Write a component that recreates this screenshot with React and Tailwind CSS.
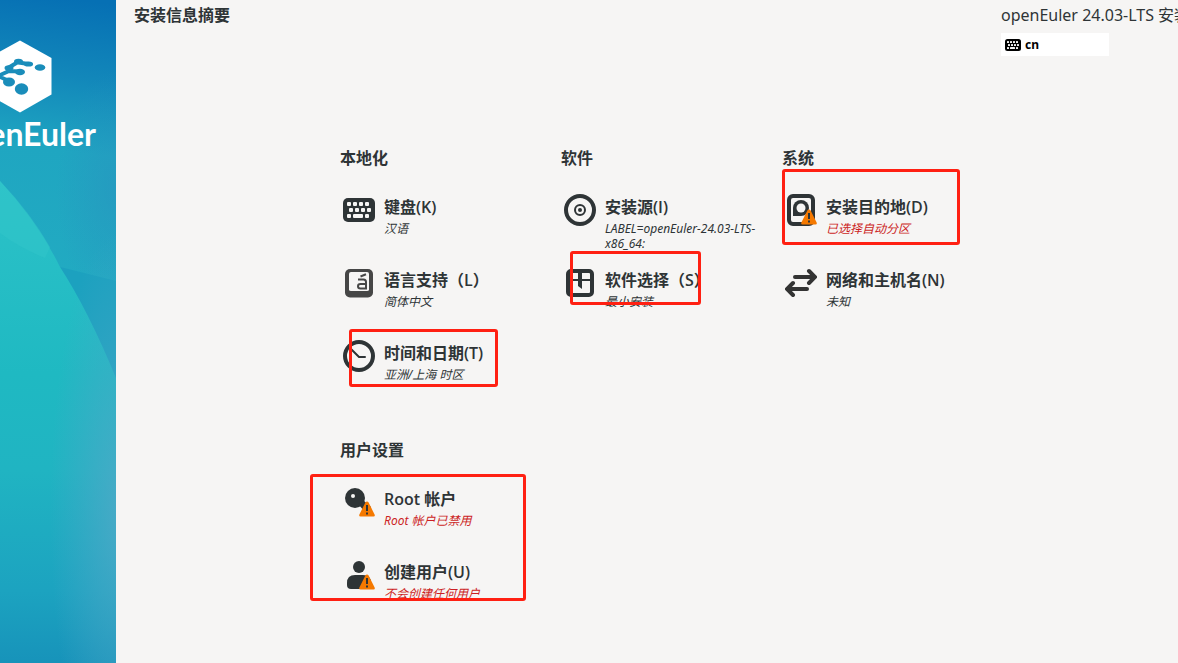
const SECTIONS = [
  {
    title: '本地化',
    items: [
      { icon: KeyboardIcon, label: '键盘(K)', status: '汉语' },
      { icon: LanguageIcon, label: '语言支持（L）', status: '简体中文' },
      { icon: ClockIcon, label: '时间和日期(T)', status: '亚洲/上海 时区', box: 'left-[9px] top-[5px] w-[149px] h-[58px]' },
    ],
  },
  {
    title: '软件',
    items: [
      { icon: DiscIcon, label: '安装源(I)', status: 'LABEL=openEuler-24.03-LTS-x86_64:' },
      { icon: PackageIcon, label: '软件选择（S）', status: '最小安装', box: 'left-[9px] top-0 w-[131px] h-[54px]' },
    ],
  },
  {
    title: '系统',
    items: [
      { icon: DiskIcon, label: '安装目的地(D)', status: '已选择自动分区', warn: true, box: 'left-0 top-[-9px] w-[178px] h-[76px]' },
      { icon: NetworkIcon, label: '网络和主机名(N)', status: '未知' },
    ],
  },
  {
    title: '用户设置',
    box: 'left-[-30px] top-[4px] w-[216px] h-[127px]',
    items: [
      { icon: RootIcon, label: 'Root 帐户', status: 'Root 帐户已禁用', warn: true },
      { icon: UserIcon, label: '创建用户(U)', status: '不会创建任何用户', warn: true },
    ],
  },
]

function KeyboardIcon({ className = 'w-8 h-8' }) {
  return (
    <svg viewBox="0 0 32 32" className={className} aria-hidden="true">
      <rect x="0" y="4" width="32" height="24" rx="5" fill="currentColor" />
      <g fill="#f6f5f4">
        {[4, 10, 16, 22].map((x) => <rect key={x} x={x} y="8" width="4" height="4" rx="1" />)}
        {[6, 12, 18, 24].map((x) => <rect key={x} x={x} y="14" width="4" height="4" rx="1" />)}
        <rect x="4" y="20" width="4" height="4" rx="1" />
        <rect x="10" y="20" width="10" height="4" rx="1" />
        <rect x="22" y="20" width="4" height="4" rx="1" />
      </g>
    </svg>
  )
}

function LanguageIcon() {
  return (
    <svg viewBox="0 0 32 32" className="w-8 h-8 text-[#464646]" aria-hidden="true">
      <rect x="2" y="2" width="28" height="28.500" rx="5" fill="currentColor" />
      <path d="M8 5H24Q26 5 26 7V22.500Q26 24 24 24H8Q6 24 6 22.500V7Q6 5 8 5Z" fill="#f6f5f4" />
      <path d="M15 12.500H20.500Q23 12.500 23 15V21.500H17.500Q15 21.500 15 19.200Q15 17 17.500 17H23" fill="none" stroke="currentColor" strokeWidth="2" />
      <path d="M17.500 9.500L23 7.300" stroke="currentColor" strokeWidth="2" />
    </svg>
  )
}

function ClockIcon() {
  return (
    <svg viewBox="0 0 32 32" className="w-8 h-8" fill="none" stroke="currentColor" aria-hidden="true">
      <circle cx="16" cy="16" r="14" strokeWidth="4" />
      <path d="M8.500 9.500L16 17H22" strokeWidth="2" strokeLinecap="round" />
    </svg>
  )
}

function DiscIcon() {
  return (
    <svg viewBox="0 0 32 32" className="w-8 h-8" fill="none" stroke="currentColor" aria-hidden="true">
      <circle cx="16" cy="16" r="14" strokeWidth="4" />
      <circle cx="16" cy="16" r="5" strokeWidth="2" />
      <circle cx="16" cy="16" r="2" fill="currentColor" stroke="none" />
    </svg>
  )
}

function PackageIcon() {
  return (
    <svg viewBox="0 0 32 32" className="w-8 h-8" fill="none" stroke="currentColor" aria-hidden="true">
      <rect x="4" y="4" width="24" height="24" rx="3" strokeWidth="4" />
      <path d="M5 13H27" strokeWidth="2" />
      <path d="M14 5H18V22L14 19Z" fill="currentColor" stroke="none" />
    </svg>
  )
}

function DiskIcon() {
  return (
    <svg viewBox="0 0 32 32" className="w-8 h-8" aria-hidden="true">
      <rect x="4" y="2" width="24" height="28" rx="4" fill="none" stroke="currentColor" strokeWidth="4" />
      <path d="M8 22V14A8 8 0 1 1 16 22Z" fill="currentColor" />
      <circle cx="16" cy="14" r="4.500" fill="#f6f5f4" />
    </svg>
  )
}

function NetworkIcon() {
  return (
    <svg viewBox="0 0 32 32" className="w-8 h-8 text-[#333333]" fill="none" stroke="currentColor" strokeWidth="4" strokeLinecap="round" aria-hidden="true">
      <path d="M10 10H29" />
      <path d="M24 4L30 10L24 16" />
      <path d="M22 22H3" />
      <path d="M8 16L2 22L8 28" />
    </svg>
  )
}

function RootIcon() {
  return (
    <svg viewBox="0 0 32 32" className="w-8 h-8" aria-hidden="true">
      <circle cx="12" cy="12" r="10" fill="currentColor" />
      <path d="M15 18L21 15L28 21V28H24Z" fill="currentColor" />
      <circle cx="10" cy="10" r="2" fill="#f6f5f4" />
    </svg>
  )
}

function UserIcon() {
  return (
    <svg viewBox="0 0 32 32" className="w-8 h-8" aria-hidden="true">
      <circle cx="16" cy="8" r="6" fill="currentColor" />
      <path d="M4 26V24Q4 16 12 16H20Q28 16 28 24V30H8Q4 30 4 26Z" fill="currentColor" />
    </svg>
  )
}

function WarningBadge() {
  return (
    <svg viewBox="0 0 16 16" className="absolute right-0 bottom-px w-4 h-4" aria-hidden="true">
      <path d="M8 .5Q9 .5 9.600 1.600L15.600 13.400Q16.400 15.500 14.500 15.500H1.500Q-.4 15.500 .4 13.400L6.400 1.600Q7 .5 8 .5Z" fill="#f57900" />
      <path d="M7 4H9V10H7ZM7 11.500H9V13.500H7Z" fill="#2e3436" />
    </svg>
  )
}

// Red marker frame drawn over the options that need attention
function Frame({ className }) {
  return <span className={`absolute pointer-events-none rounded-[3px] border-3 border-[#ff2012] ${className}`} />
}

function Spoke({ item }) {
  const Icon = item.icon
  return (
    <button type="button" className="relative flex items-start w-full min-h-[73px] pt-4 pl-[3px] gap-[9px] text-left">
      <span className="relative shrink-0">
        <Icon />
        {item.warn && <WarningBadge />}
      </span>
      <span className="flex-1 min-w-0 pr-4">
        <span className="block leading-[27px] font-semibold whitespace-nowrap font-['Open_Sans','Noto_Sans_CJK_SC',sans-serif]">{item.label}</span>
        <span className={`block text-[12px] leading-[15px] italic ${item.warn ? 'text-[#cc1f24]' : ''}`}>{item.status}</span>
      </span>
      {item.box && <Frame className={item.box} />}
    </button>
  )
}

function Section({ section }) {
  return (
    <section>
      <h2 className="text-base font-bold">{section.title}</h2>
      <div className="relative mt-2">
        {section.items.map((item) => (
          <Spoke key={item.label} item={item} />
        ))}
        {section.box && <Frame className={section.box} />}
      </div>
    </section>
  )
}

function Sidebar() {
  return (
    <aside className="relative shrink-0 w-[116px] overflow-hidden bg-[#1f9fc0]">
      <svg viewBox="0 0 116 663" preserveAspectRatio="none" className="absolute inset-0 w-full h-full" aria-hidden="true">
        <defs>
          <linearGradient id="sky" gradientUnits="userSpaceOnUse" x1="80" y1="0" x2="40" y2="300">
            <stop offset="0" stopColor="#0670b4" />
            <stop offset="0.25" stopColor="#1287ba" />
            <stop offset="0.5" stopColor="#1fa6c1" />
            <stop offset="1" stopColor="#22abc2" />
          </linearGradient>
          <linearGradient id="wave" x1="0" y1="0" x2="0" y2="1">
            <stop offset="0" stopColor="#2cc2c8" />
            <stop offset="0.4" stopColor="#1fb9c2" />
            <stop offset="0.6" stopColor="#20b4c2" />
            <stop offset="0.85" stopColor="#1ca3c0" />
            <stop offset="1" stopColor="#1793ba" />
          </linearGradient>
          <radialGradient id="edge">
            <stop offset="0" stopColor="#52a9c8" stopOpacity="0.8" />
            <stop offset="1" stopColor="#4aa6c8" stopOpacity="0" />
          </radialGradient>
          <radialGradient id="dusk">
            <stop offset="0" stopColor="#2a90bf" stopOpacity="0.5" />
            <stop offset="1" stopColor="#2a90bf" stopOpacity="0" />
          </radialGradient>
        </defs>
        <rect width="116" height="663" fill="url(#sky)" />
        <ellipse cx="116" cy="190" rx="60" ry="120" fill="url(#dusk)" />
        <path d="M60 267L116 281V380Z" fill="#1ca1bf" />
        <path d="M0 181Q38 222 60 267Q88 310 116 378V663H0Z" fill="url(#wave)" />
        <path d="M0 181Q30 212 50 247L45 258Q20 248 0 233Z" fill="#31c6ca" opacity="0.5" />
        <ellipse cx="120" cy="510" rx="70" ry="280" fill="url(#edge)" />
      </svg>
      <div className="relative flex flex-col pt-10">
        <svg viewBox="0 0 52 74" className="w-[52px] h-[74px]" aria-hidden="true">
          <path d="M20 .5L51.500 18V54.500L20 72.500L-12 54.500V18Z" fill="#fff" />
          <g fill="#1a8dba">
            <ellipse cx="40" cy="27.500" rx="5.300" ry="3.200" />
            <ellipse cx="21.500" cy="49" rx="6.700" ry="5.700" />
            <ellipse cx="18.500" cy="21.500" rx="4.500" ry="2.800" />
            <ellipse cx="28.500" cy="24" rx="4.600" ry="2.600" />
            <ellipse cx="20" cy="32" rx="5" ry="3.200" />
            <ellipse cx="9" cy="42" rx="6" ry="4.600" />
            <ellipse cx="9" cy="28" rx="4.500" ry="2.800" />
          </g>
          <path d="M18.500 22.500L28.500 24M8 28L18 22M-2 36L9 31L20 31.500M-2 36L9 41" fill="none" stroke="#1a8dba" strokeWidth="4" />
        </svg>
        <p className="self-end pr-5 font-['Lato',sans-serif] text-[32px] leading-[40px] font-bold text-white">openEuler</p>
      </div>
    </aside>
  )
}

export default function App() {
  const userSection = SECTIONS[3]

  return (
    <div className="flex min-h-screen overflow-hidden bg-[#f6f5f4] text-[#2e3436] font-['Noto_Sans','Noto_Sans_CJK_SC',sans-serif]">
      <Sidebar />
      <main className="flex-1 min-w-0">
        <header className="flex items-start justify-between overflow-hidden pl-[18px] pt-[3px]">
          <h1 className="text-base font-bold">安装信息摘要</h1>
          <div className="w-[177px]">
            <p className="text-base whitespace-nowrap">openEuler 24.03-LTS 安装</p>
            <button type="button" className="flex items-center gap-1 w-[108px] h-[23px] mt-1.5 pl-1 bg-white text-black text-[12px] font-bold">
              <KeyboardIcon className="w-4 h-4" />
              cn
            </button>
          </div>
        </header>

        {/* Installation options */}
        <div className="pl-56 pt-[90px]">
          <div className="grid grid-cols-[repeat(3,221px)]">
            {SECTIONS.slice(0, 3).map((section) => (
              <Section key={section.title} section={section} />
            ))}
          </div>
          <div className="w-[221px] mt-[41px]">
            <Section section={userSection} />
          </div>
        </div>
      </main>
    </div>
  )
}
